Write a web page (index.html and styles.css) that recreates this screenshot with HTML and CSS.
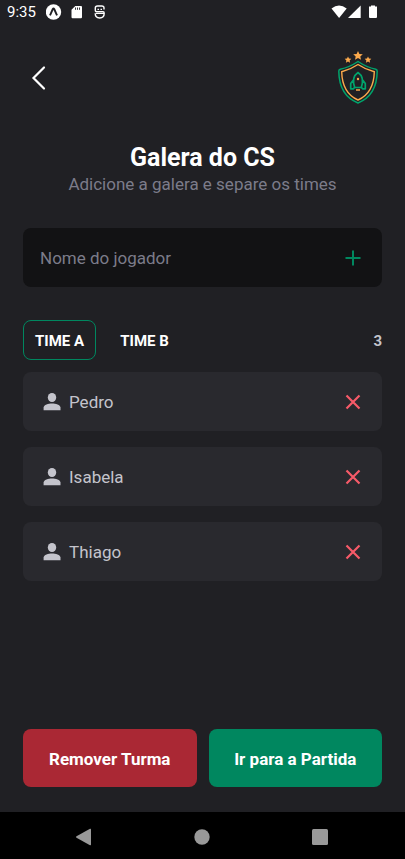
FILE: index.html
```html
<!DOCTYPE html>
<html lang="pt-BR">
<head>
<meta charset="utf-8">
<meta name="viewport" content="width=device-width, initial-scale=1">
<title>Galera do CS</title>
<link rel="stylesheet" href="styles.css">
</head>
<body>
<svg class="defs" aria-hidden="true">
  <symbol id="person" viewBox="0 0 18 18"><ellipse cx="9" cy="4.5" rx="4.2" ry="4.5"/><path d="M.6 17.2V14.600C.6 11.900 5.500 10.500 9 10.500s8.500 1.400 8.500 4.100v2.600z"/></symbol>
  <symbol id="close" viewBox="0 0 16 16"><path d="M1.500 1.500l13 13M14.500 1.500l-13 13" fill="none" stroke="currentColor" stroke-width="2.200"/></symbol>
</svg>
<div class="status">
  <span class="clock">9:35</span>
  <svg class="status-left" width="62" height="16" viewBox="0 0 62 16" aria-hidden="true">
    <circle cx="7.500" cy="8" r="7.700" fill="#fff"/>
    <path d="M4 11.300L6.800 5q.7-1 1.400 0L11 11.300" fill="none" stroke="#202024" stroke-width="1.900"/>
    <path d="M29.300 2H35q1 0 1 1v10q0 1.200-1 1.200h-8.500q-1 0-1-1.200V5.700z" fill="#fff"/>
    <path d="M29.500 3.500v2.300M31.500 3.500v2.300M33.500 3.500v2.300" stroke="#202024" stroke-width=".9"/>
    <path d="M58 5.500V4q0-2-2.200-2h-4.300q-2.200 0-2.200 2v2.200q0 1.600 2 1.600H57q1.200 0 1.200 1.500 0 4.500-4.500 4.700-4.500-.2-4.500-4.700" fill="none" stroke="#fff" stroke-width="1.400"/>
    <path d="M51.500 5.300h1.500M54.500 5.300H56M50 9.500h8" stroke="#fff" stroke-width="1.200"/>
  </svg>
  <svg class="status-right" width="48" height="14" viewBox="0 0 48 14" fill="#fff" aria-hidden="true">
    <path d="M.5 3.500Q8-2.500 15.700 3.500L8.100 13z"/><path d="M29.700 .500V13H17z"/><path d="M38 1.500h2V.5h4v1h2V12q0 1-1 1h-6q-1 0-1-1z"/>
  </svg>
</div>
<main class="screen">
  <header class="top">
    <button class="back" type="button" aria-label="Voltar"><svg width="16" height="26" viewBox="0 0 16 26" aria-hidden="true"><path d="M13 2.500L2.500 13 13 23.500" fill="none" stroke="#fff" stroke-width="2.200" stroke-linecap="round"/></svg></button>
    <svg class="logo" width="42" height="54" viewBox="0 0 42 54" fill="none" aria-hidden="true">
      <g fill="#fba94c">
        <path d="M21 0l1.400 3 3.400.3-2.500 2.200.7 3.300L21 7.100l-3 1.700.7-3.300-2.500-2.200 3.400-.3z"/>
        <path d="M11 5.500l1 2.100 2.300.2-1.700 1.600.5 2.300-2.100-1.200-2.100 1.200.5-2.300-1.700-1.600 2.300-.2z"/>
        <path d="M31 5.500l1 2.100 2.300.2-1.700 1.600.5 2.300-2.100-1.200-2.100 1.200.5-2.300-1.700-1.600 2.300-.2z"/>
      </g>
      <path d="M21 10.500C15.500 14.200 9 17 3.200 18.300q-1.500.4-1.400 2C2 34.500 7 46.500 21 52 35 46.500 40 34.500 40.200 20.300q.1-1.600-1.400-2C33 17 26.500 14.200 21 10.500z" stroke="#00a36c" stroke-width="1.500"/>
      <path d="M21 13.500C16 16.900 10.500 19.200 4.700 20.700 5 33.500 9.300 43.800 21 49 32.700 43.800 37 33.500 37.300 20.700 31.500 19.200 26 16.900 21 13.500z" stroke="#fba94c" stroke-width="1.400"/>
      <path d="M17.700 36.500C15.500 30 16.500 24.500 21 21.500c4.500 3 5.500 8.500 3.300 15zM16.300 29l-2.600 3.500v5.300h2.500l1.500-1.500M25.700 29l2.600 3.500v5.300h-2.500l-1.500-1.500" stroke="#00a36c" stroke-width="1.700" stroke-linejoin="round"/>
      <circle cx="21" cy="28" r="1.200" fill="#fba94c"/><path d="M19 39h4" stroke="#fba94c" stroke-width="1.500"/>
    </svg>
  </header>
  <section class="heading">
    <h1>Galera do CS</h1>
    <p>Adicione a galera e separe os times</p>
  </section>
  <form class="add">
    <input type="text" placeholder="Nome do jogador" aria-label="Nome do jogador">
    <button class="icon-button add-button" type="button" aria-label="Adicionar"><svg width="16" height="16" viewBox="0 0 16 16" aria-hidden="true"><path d="M8 .500v15M.500 8h15" stroke="currentColor" stroke-width="2"/></svg></button>
  </form>
  <nav class="tabs" aria-label="Times">
    <button class="tab active" type="button">TIME A</button>
    <button class="tab" type="button">TIME B</button>
    <span class="count">3</span>
  </nav>
  <ul class="players">
    <li><svg class="person" aria-hidden="true"><use href="#person"/></svg><span>Pedro</span><button class="icon-button remove" type="button" aria-label="Remover Pedro"><svg width="16" height="16" aria-hidden="true"><use href="#close"/></svg></button></li>
    <li><svg class="person" aria-hidden="true"><use href="#person"/></svg><span>Isabela</span><button class="icon-button remove" type="button" aria-label="Remover Isabela"><svg width="16" height="16" aria-hidden="true"><use href="#close"/></svg></button></li>
    <li><svg class="person" aria-hidden="true"><use href="#person"/></svg><span>Thiago</span><button class="icon-button remove" type="button" aria-label="Remover Thiago"><svg width="16" height="16" aria-hidden="true"><use href="#close"/></svg></button></li>
  </ul>
  <footer class="actions">
    <button class="action danger" type="button">Remover Turma</button>
    <button class="action primary" type="button">Ir para a Partida</button>
  </footer>
</main>
<nav class="system" aria-label="Sistema">
  <button type="button" aria-label="Voltar"><svg width="18" height="18" viewBox="0 0 18 18" aria-hidden="true"><path d="M1.500 8.200L15 .800q1-.4 1 .6v15.200q0 1-1 .6L1.500 9.800q-1.200-.8 0-1.600z"/></svg></button>
  <button type="button" aria-label="Início"><svg width="18" height="18" viewBox="0 0 18 18" aria-hidden="true"><circle cx="9" cy="9" r="7.700"/></svg></button>
  <button type="button" aria-label="Recentes"><svg width="18" height="18" viewBox="0 0 18 18" aria-hidden="true"><rect x="1" y="1" width="16" height="16" rx="1.500"/></svg></button>
</nav>
</body>
</html>
```
FILE: styles.css
```css
* { box-sizing: border-box; }
body {
  margin: 0;
  min-height: 100vh;
  display: flex;
  flex-direction: column;
  background: #202024;
  color: #fff;
  font-family: Roboto, "Liberation Sans", sans-serif;
  font-size: 17px;
  line-height: 24px;
}
button, input {
  font: inherit;
  color: inherit;
  border: 0;
  padding: 0;
  background: none;
}
svg { display: block; flex: none; }
.defs { position: absolute; width: 0; height: 0; }
.status {
  display: flex;
  align-items: center;
  height: 24px;
  padding: 0 26px 0 7px;
  font-size: 15px;
}
.status-left { margin-left: 10px; }
.status-right { margin-left: auto; }
.screen {
  flex: 1;
  display: flex;
  flex-direction: column;
  padding: 27px 23px 25px;
}
.top {
  display: flex;
  align-items: center;
  justify-content: space-between;
  padding: 0 3px 0 8px;
}
.heading { margin: 39px 0 32px; text-align: center; }
h1 { margin: 0; font-size: 25px; line-height: 28px; font-weight: 700; }
p { margin: 0; color: #7c7c8a; }
.add, .players li {
  display: flex;
  align-items: center;
  height: 59px;
  padding-top: 1px;
  border-radius: 8px;
}
.add { background: #121214; padding-right: 8px; padding-left: 17px; }
.add input { flex: 1; min-width: 0; height: 58px; outline: 0; }
.add input::placeholder { color: #7c7c8a; opacity: 1; }
.icon-button {
  display: flex;
  align-items: center;
  justify-content: center;
  width: 42px;
  height: 42px;
}
.add-button { color: #00875f; }
.tabs {
  display: flex;
  align-items: center;
  gap: 12px;
  margin: 33px 0 12px;
  font-size: 15px;
  font-weight: 700;
}
.tab { width: 73px; height: 40px; padding-top: 2px; border-radius: 8px; }
.active { border: 1px solid #00875f; }
.count { margin-left: auto; padding-top: 2px; color: #c4c4cc; }
.players {
  display: flex;
  flex-direction: column;
  gap: 16px;
  margin: 0;
  padding: 0;
  list-style: none;
}
.players li {
  gap: 8px;
  padding-right: 8px;
  padding-left: 20px;
  background: #29292e;
  color: #c4c4cc;
}
.person { width: 18px; height: 18px; fill: currentColor; }
.remove { margin-left: auto; color: #f75a68; }
.actions { display: flex; gap: 12px; margin-top: auto; }
.action { flex: 1; height: 58px; padding-top: 2px; border-radius: 8px; font-weight: 700; }
.danger { background: #aa2834; }
.primary { background: #00875f; }
.system {
  display: flex;
  justify-content: space-between;
  align-items: center;
  height: 47px;
  padding: 2px 76px 0 75px;
  background: #000;
}
.system button { height: 18px; fill: #999; }
```
